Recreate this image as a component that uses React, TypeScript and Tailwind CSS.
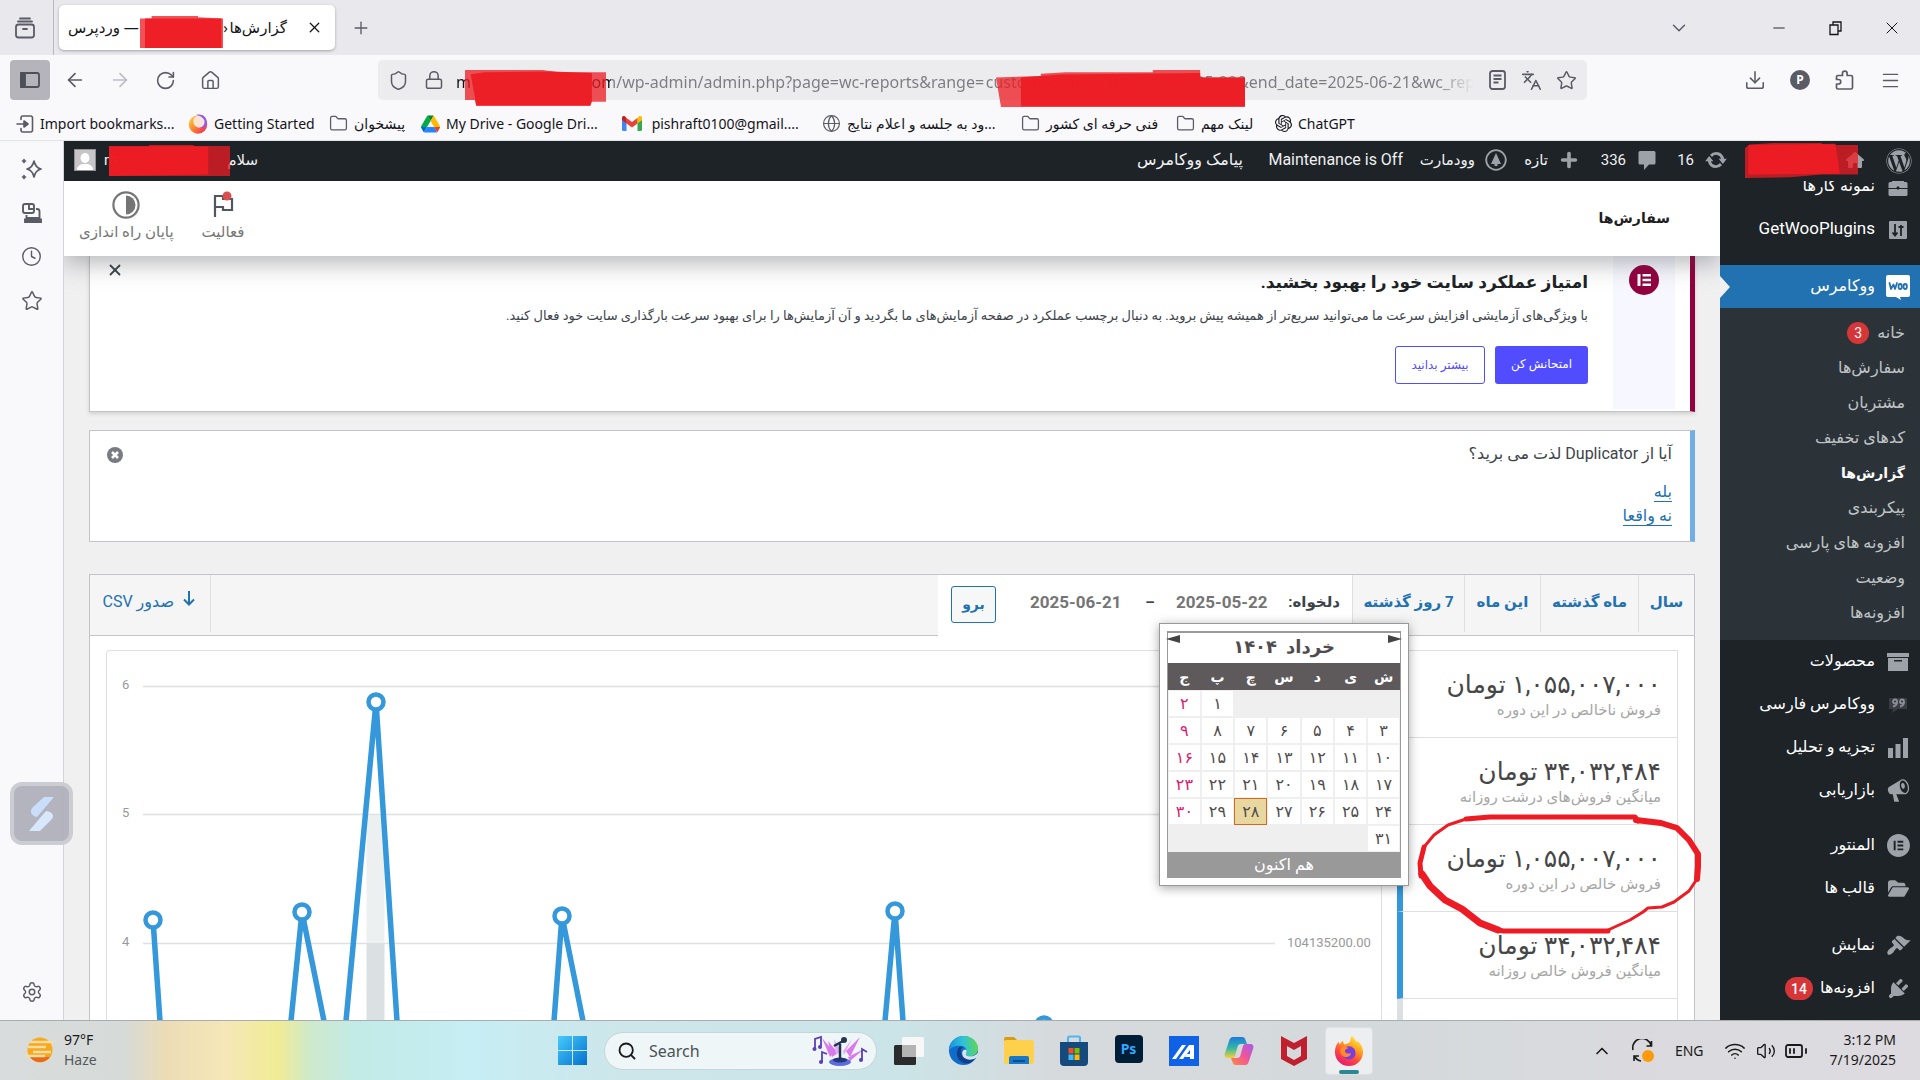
import type { ReactNode } from "react";
import {
  ArrowLeft,
  ArrowRight,
  BatteryMedium,
  ChevronDown,
  ChevronUp,
  Clock,
  Download,
  Folder,
  Globe,
  House,
  Languages,
  Lock,
  Menu,
  Minus,
  Plus,
  RotateCw,
  Search,
  Settings,
  Shield,
  Star,
  Volume2,
  Wifi,
  X,
} from "lucide-react";
import { FaElementor, FaFolderOpen, FaHouse, FaWordpress, FaWrench } from "react-icons/fa6";
import { SiOpenai } from "react-icons/si";

/* ---------- small drawings ---------- */

function RedMark({ className, points, inner }: { className: string; points: string; inner: string }) {
  return (
    <svg className={`pointer-events-none absolute overflow-visible ${className}`} viewBox="0 0 100 100" preserveAspectRatio="none" aria-hidden="true">
      <polygon points={points} fill="#ed1c24" opacity=".76" />
      <polygon points={inner} fill="#ed1c24" opacity=".95" />
    </svg>
  );
}

function FirefoxIcon({ size }: { size: number }) {
  return (
    <svg width={size} height={size} viewBox="0 0 32 32" aria-hidden="true">
      <defs>
        <linearGradient id="ff" x1=".8" y1="0" x2=".25" y2="1">
          <stop offset="0" stopColor="#fff44f" />
          <stop offset=".35" stopColor="#ffa41c" />
          <stop offset=".65" stopColor="#ff4a3d" />
          <stop offset="1" stopColor="#e3157a" />
        </linearGradient>
      </defs>
      <path d="M19 0c4 3 5 7 5 7s1-1 1-2c4 3 6 8 6 12 0 8-6 15-15 15S1 25 1 17c0-5 2-9 4-11l1 3 3-4 2 4c2-1 5-1 6-3s0-4 2-6z" fill="url(#ff)" />
      <circle cx="16" cy="18" r="7" fill="#7a3ee0" />
      <path d="M8 12c3-2 6 0 8 1-3 0-5 2-4 4s4 2 6 1c0 4-6 6-9 3s-3-7-1-9z" fill="#ff8a2a" />
    </svg>
  );
}

function GettingStartedIcon() {
  return (
    <svg width="20" height="20" viewBox="0 0 20 20" aria-hidden="true">
      <defs>
        <linearGradient id="gs" x1="0" y1=".3" x2=".8" y2="1">
          <stop offset="0" stopColor="#ffc53a" />
          <stop offset=".5" stopColor="#ff7a2f" />
          <stop offset="1" stopColor="#f0305c" />
        </linearGradient>
      </defs>
      <circle cx="10" cy="10.500" r="9.200" fill="url(#gs)" />
      <circle cx="11.500" cy="7.500" r="6.200" fill="#fbe3d8" />
      <path d="M8 1c7-2 12 3 10.500 9.500C17 14 14 14.500 11 14c4-1 6-4 5.500-7S12 1.500 8 1z" fill="#9059e8" />
    </svg>
  );
}

function DriveIcon() {
  return (
    <svg width="19" height="18" viewBox="0 0 87 78" aria-hidden="true">
      <path d="M6.600 66.900 10.500 73.600c.8 1.400 2 2.500 3.300 3.300L27.500 53H0c0 1.600.4 3.100 1.200 4.500z" fill="#0066da" />
      <path d="M43.700 25 29.900 1.200c-1.300.8-2.500 1.900-3.300 3.300L1.200 48.500A9 9 0 0 0 0 53h27.500z" fill="#00ac47" />
      <path d="M73.500 76.800c1.400-.8 2.500-1.900 3.300-3.300l1.600-2.700 7.700-13.300c.8-1.400 1.200-3 1.200-4.500H59.800l5.900 11.500z" fill="#ea4335" />
      <path d="M43.700 25 57.400 1.200C56 .4 54.500 0 52.900 0H34.400c-1.600 0-3.200.4-4.500 1.200z" fill="#00832d" />
      <path d="M59.800 53H27.500L13.800 76.800c1.300.8 2.900 1.200 4.500 1.200h50.800c1.600 0 3.100-.4 4.400-1.200z" fill="#2684fc" />
      <path d="M73.400 26.500 60.700 4.500c-.8-1.400-1.900-2.500-3.300-3.300L43.700 25l16.100 28h27.500c0-1.600-.4-3.100-1.200-4.500z" fill="#ffba00" />
    </svg>
  );
}

function GmailIcon() {
  return (
    <svg width="20" height="15" viewBox="0 0 20 15" aria-hidden="true">
      <path d="M0 2h4.500v13H1.500A1.500 1.500 0 0 1 0 13.500z" fill="#4285f4" />
      <path d="M15.500 2H20v11.500a1.500 1.500 0 0 1-1.500 1.500h-3z" fill="#34a853" />
      <path d="M4.500 2 10 6l5.500-4v5.500L10 11.500 4.500 7.500z" fill="#ea4335" />
      <path d="M0 2c0-2 2-2.500 3.200-1.500L4.500 2v5.500L0 4z" fill="#c5221f" />
      <path d="M20 2c0-2-2-2.500-3.200-1.500L15.500 2v5.500L20 4z" fill="#fbbc04" />
    </svg>
  );
}

function ImportIcon() {
  return (
    <svg width="18" height="18" viewBox="0 0 18 18" fill="none" stroke="#5b5b66" strokeWidth="1.600" strokeLinecap="round" strokeLinejoin="round" aria-hidden="true">
      <path d="M5 4.500V3a2 2 0 0 1 2-2h7.500a2 2 0 0 1 2 2v12a2 2 0 0 1-2 2H7a2 2 0 0 1-2-2v-1.500M1 9h8" />
      <path d="M8 6l4 3-4 3z" fill="#5b5b66" />
    </svg>
  );
}

function SyncArrows({ size, color }: { size: number; color: string }) {
  return (
    <svg width={size} height={size} viewBox="0 0 20 20" fill={color} aria-hidden="true">
      <path d="M10.200 3.300c3.300 0 6.100 2.400 6.600 5.600H19l-3.300 4.400-3.500-4.400h2.100a4.300 4.300 0 0 0-7.600-1.500L5 5.600a6.800 6.800 0 0 1 5.200-2.300zm-.4 13.400a6.700 6.700 0 0 1-6.600-5.600H1l3.300-4.400 3.500 4.400H5.700a4.300 4.300 0 0 0 7.600 1.500l1.700 1.800a6.800 6.800 0 0 1-5.200 2.300z" />
    </svg>
  );
}

function WooIcon() {
  return (
    <svg width="26" height="26" viewBox="0 0 26 26" aria-hidden="true">
      <path d="M3 1h20a2 2 0 0 1 2 2v18a2 2 0 0 1-2 2h-8l1 3-5-3H3a2 2 0 0 1-2-2V3a2 2 0 0 1 2-2z" fill="#fff" />
      <g fill="none" stroke="#2271b1" strokeWidth="1.800" strokeLinecap="round" strokeLinejoin="round">
        <path d="M4.500 9 6 15l2.500-4.500L10 15l2-6" />
        <ellipse cx="15.200" cy="12.500" rx="1.700" ry="2.500" />
        <ellipse cx="20.200" cy="12.500" rx="1.700" ry="2.500" />
      </g>
    </svg>
  );
}

function PortfolioIcon() {
  return (
    <svg width="20" height="20" viewBox="0 0 20 20" aria-hidden="true">
      <path d="M4 2h3l1 2h4l1-2h3v3h2a1.500 1.500 0 0 1 1.500 1.500V11H.5V6.500A1.500 1.500 0 0 1 2 5h2zM.5 12h19v5.500A1.500 1.500 0 0 1 18 19H2a1.500 1.500 0 0 1-1.500-1.500z" fill="#9ca2a7" />
      <path d="M10 9l2 2-2 2-2-2z" fill="#1d2327" />
    </svg>
  );
}

function SlidersIcon() {
  return (
    <svg width="20" height="20" viewBox="0 0 20 20" aria-hidden="true">
      <rect x="1" y="1" width="18" height="18" rx="1" fill="#9ca2a7" />
      <path d="M7 4v11M4.500 12.500 7 15.500l2.500-3M13 16V5M10.500 7h5" stroke="#1d2327" strokeWidth="1.800" fill="none" />
    </svg>
  );
}

function ArchiveIcon() {
  return (
    <svg width="22" height="18" viewBox="0 0 22 18" fill="#9ca2a7" aria-hidden="true">
      <path d="M0 0h22v4H0zM1 5h20v13H1z" />
      <path d="M7 7h8v1.500H7z" fill="#1d2327" />
    </svg>
  );
}

function BarsIcon() {
  return (
    <svg width="20" height="20" viewBox="0 0 20 20" fill="#9ca2a7" aria-hidden="true">
      <path d="M0 10h5v10H0zM7.500 6h5v14h-5zM15 0h5v20h-5z" />
    </svg>
  );
}

function QuoteIcon() {
  return (
    <svg width="18" height="16" viewBox="0 0 18 16" aria-hidden="true">
      <path d="M0 1h18v11H9l-6 4 1-4H0z" fill="#3b3b44" />
      <g fill="none" stroke="#8a8f95" strokeWidth="1.800">
        <circle cx="6" cy="4.500" r="2" />
        <path d="M8 5c0 3-1.500 4-4 4.500" />
        <circle cx="13" cy="4.500" r="2" />
        <path d="M15 5c0 3-1.500 4-4 4.500" />
      </g>
    </svg>
  );
}

function Dashicon({ d }: { d: string }) {
  return (
    <svg width="25" height="25" viewBox="0 0 20 20" fill="currentColor" fillRule="evenodd" aria-hidden="true">
      <path d={d} />
    </svg>
  );
}

const megaphone =
  "M18.150 5.940c.46 1.620.38 3.220-.02 4.480-.42 1.280-1.260 2.180-2.300 2.480-.16.06-.26.06-.4.06-.06.02-.12.02-.18.02-.06.02-.14.02-.22.02h-6.800l2.220 5.500c.02.14-.06.26-.14.34-.08.1-.24.16-.34.16H6.950c-.1 0-.26-.06-.34-.16-.08-.08-.16-.2-.14-.34l-1-5.500H4.250l-.02-.02c-.5.06-1.080-.18-1.540-.62s-.88-1.080-1.060-1.880c-.24-.8-.2-1.560-.02-2.200.18-.62.58-1.080 1.060-1.300l.02-.02 9-5.400c.1-.06.18-.1.24-.16.06-.04.14-.08.24-.12.16-.08.28-.12.5-.18 1.040-.3 2.240.1 3.220.98s1.840 2.240 2.260 3.860zm-2.580 5.980h-.02c.4-.1.74-.34 1.040-.7.58-.7.86-1.760.86-3.040 0-.64-.1-1.300-.28-1.980-.34-1.360-1.020-2.500-1.780-3.240s-1.680-1.100-2.460-.88c-.82.22-1.400.96-1.700 2-.32 1.040-.28 2.360.06 3.720.38 1.360 1 2.500 1.800 3.240.78.74 1.620 1.100 2.480.88zm-2.540-7.960c.22-.04.42-.02.62.04.38.16.76.48 1.020 1s.42 1.200.42 1.780c0 .3-.04.56-.12.8-.18.48-.44.84-.86.94-.34.1-.8-.06-1.140-.4s-.64-.86-.78-1.500c-.18-.62-.12-1.240.02-1.720s.48-.84.82-.94z";
const brush =
  "M14.480 11.060L7.410 3.990l1.500-1.500c.5-.56 2.300-.47 3.510.32 1.210.8 1.430 1.280 2.910 2.100 1.180.64 2.450 1.260 4.450.85zm-.71.71L6.700 4.700 4.930 6.470c-.39.39-.39 1.020 0 1.410l1.060 1.060c.39.39.39 1.030 0 1.420-.6.6-1.430 1.110-2.210 1.690-.35.26-.7.53-1.010.84C1.430 14.230.4 16.080 1.400 17.070c.99 1 2.840-.03 4.180-1.360.31-.31.58-.66.85-1.020.57-.78 1.080-1.610 1.690-2.210.39-.39 1.020-.39 1.410 0l1.060 1.060c.39.39 1.020.39 1.410 0z";
const plug =
  "M13.110 4.360L9.870 7.600 8 5.730l3.240-3.240c.35-.34 1.050-.2 1.560.32.52.51.66 1.210.31 1.550zm-8 1.770l.91-1.120 9.010 9.010-1.190.84c-.71.71-2.630 1.160-3.820 1.160H6.140L4.900 17.260c-.59.59-1.540.59-2.120 0-.59-.58-.59-1.530 0-2.120l1.240-1.240v-3.880c0-1.130.4-3.190 1.090-3.890zm7.260 3.970l3.240-3.240c.34-.35 1.040-.21 1.550.31.52.51.66 1.210.31 1.550l-3.240 3.250z";

/* ---------- browser chrome ---------- */

function TitleBar() {
  return (
    <header className="flex h-[55px] shrink-0 items-center bg-[#e9e8ed] text-[#15141a]">
      <div className="flex h-full w-[54px] items-center border-r border-[#b9b8c0] pl-3.5">
        <button aria-label="Tab archive" className="text-[#5b5b66]">
          <svg width="22" height="22" viewBox="0 0 22 22" fill="none" stroke="currentColor" strokeWidth="1.800" strokeLinecap="round">
            <path d="M6 1.500h10M4 4.500h14" />
            <rect x="2" y="7.500" width="18" height="13" rx="2.500" />
            <path d="M9 12h4" />
          </svg>
        </button>
      </div>
      <div className="relative ml-[5px] flex h-[45px] w-[276px] items-center justify-between rounded-[5px] bg-white pr-3 pl-[9px] shadow-[0_1px_3px_rgba(0,0,0,0.3)]">
        <div dir="rtl" className="flex w-[219px] justify-between text-[15px] whitespace-nowrap">
          <span>گزارش‌ها{"\u200a"}‹</span>
          <span>— وردپرس</span>
        </div>
        <button aria-label="Close tab">
          <X size={17} strokeWidth={1.8} />
        </button>
        <RedMark className="top-[11px] left-[81px] h-8 w-[83px]" points="0,8 14,8 14,0 70,0 70,4 100,8 100,100 0,100" inner="6,8 98,8 98,100 6,100" />
      </div>
      <button aria-label="New tab" className="ml-4 text-[#5b5b66]">
        <Plus size={20} strokeWidth={1.6} />
      </button>
      <div className="flex-1" />
      <button aria-label="List all tabs" className="mr-20 text-[#5b5b66]">
        <ChevronDown size={22} strokeWidth={1.6} />
      </button>
      <button aria-label="Minimize" className="mr-10">
        <Minus size={18} strokeWidth={1.2} />
      </button>
      <button aria-label="Restore" className="mr-[38px]">
        <svg width="16" height="16" viewBox="0 0 16 16" fill="none" stroke="currentColor" strokeWidth="1.300">
          <path d="M2 5h8v9.500H2zM5 5V2h8v9h-3" />
        </svg>
      </button>
      <button aria-label="Close window" className="mr-[18px]">
        <X size={20} strokeWidth={1.2} />
      </button>
    </header>
  );
}

function NavBar() {
  return (
    <div className="flex h-[50px] shrink-0 items-center bg-[#f9f9fb] text-[#5b5b66]">
      <button aria-label="Sidebar" className="ml-2.5 flex h-10 w-10 items-center justify-center rounded-[4px] bg-[#b5b4ba]">
        <svg width="20" height="16" viewBox="0 0 20 16" fill="none" stroke="#4f4f5a" strokeWidth="1.800">
          <rect x="1" y="1" width="18" height="14" rx="2" />
          <path d="M1 1h4v14H1z" fill="#4f4f5a" />
        </svg>
      </button>
      <button aria-label="Back" className="ml-3.5">
        <ArrowLeft size={22} strokeWidth={1.8} />
      </button>
      <button aria-label="Forward" className="ml-[23px] text-[#bdbcc3]">
        <ArrowRight size={22} strokeWidth={1.8} />
      </button>
      <button aria-label="Reload" className="ml-6">
        <RotateCw size={21} strokeWidth={1.8} />
      </button>
      <button aria-label="Home" className="ml-6">
        <House size={21} strokeWidth={1.7} />
      </button>
      <div className="relative ml-[157px] flex h-10 min-w-0 flex-1 items-center rounded-[5px] bg-[#ececee] pr-2.5 pl-2.5">
        <Shield size={21} strokeWidth={1.7} className="shrink-0" />
        <Lock size={20} strokeWidth={1.8} className="ml-[15px] shrink-0" />
        <input
          aria-label="Address"
          readOnly
          className="ml-3 min-w-0 flex-1 bg-[linear-gradient(90deg,#15141a_155px,#7c7b80_155px,#7c7b80_980px,#ececee_1018px)] bg-clip-text pt-1 text-base text-transparent outline-none"
          value={
            "m" + "\u00a0".repeat(29) + "om/wp-admin/admin.php?page=wc-reports&range=\u200acustom&start_date" + "\u00a0".repeat(6) + "2025-05-22&end_date=2025-06-21&wc_reports"
          }
        />
        <svg width="17" height="20" viewBox="0 0 17 20" fill="none" stroke="currentColor" strokeWidth="1.800" className="ml-4 shrink-0">
          <rect x="1" y="1" width="15" height="18" rx="2.500" />
          <path d="M4.500 5.500h8M4.500 9h8M4.500 12.500h5" />
        </svg>
        <Languages size={21} strokeWidth={1.9} className="ml-[15px] shrink-0" />
        <Star size={21} strokeWidth={1.7} className="ml-3.5 shrink-0" />
        <RedMark className="top-2.5 left-[87px] h-9 w-[141px]" points="0,0 55,0 66,6 100,6 100,88 89,88 89,100 8,100 7,83 0,83" inner="4,12 14,6 62,4 90,8 90,88 89,98 8,98" />
        <RedMark className="top-2.5 left-[618px] h-[37px] w-[249px]" points="0,20 18,16 18,10 28,6 63,6 63,0 82,0 82,20 100,20 100,100 2,100" inner="10,20 26,12 82,8 82,20 100,20 100,98 10,98" />
      </div>
      <div className="ml-[157px] flex items-center gap-6 pr-[19px]">
        <button aria-label="Downloads">
          <Download size={22} strokeWidth={1.7} />
        </button>
        <button aria-label="Profile" className="flex h-5 w-5 items-center justify-center rounded-full bg-[#5b5b66] text-xs font-bold text-white">
          P
        </button>
        <button aria-label="Extensions">
          <svg width="22" height="22" viewBox="0 0 22 22" fill="none" stroke="currentColor" strokeWidth="1.700" strokeLinejoin="round">
            <path d="M4 20a1.500 1.500 0 0 1-1.500-1.500V15h2a2 2 0 1 0 0-4.500h-2V8A1.500 1.500 0 0 1 4 6.500h4.500v-2a2.300 2.300 0 0 1 4.600 0v2H17A1.500 1.500 0 0 1 18.500 8v10.500A1.500 1.500 0 0 1 17 20z" />
          </svg>
        </button>
        <button aria-label="Menu">
          <Menu size={21} strokeWidth={1.7} />
        </button>
      </div>
    </div>
  );
}

const folder = <Folder size={19} strokeWidth={1.6} className="text-[#5b5b66]" />;

const bookmarks: { width: string; icon: ReactNode; label: string }[] = [
  { width: "w-[172px]", icon: <ImportIcon />, label: "Import bookmarks..." },
  { width: "w-[141px]", icon: <GettingStartedIcon />, label: "Getting Started" },
  { width: "w-[92px]", icon: folder, label: "پیشخوان" },
  { width: "w-[201px]", icon: <DriveIcon />, label: "My Drive - Google Dri..." },
  { width: "w-[200px]", icon: <GmailIcon />, label: "\u00a0pishraft0100@gmail...." },
  { width: "w-[199px]", icon: <Globe size={19} strokeWidth={1.5} className="text-[#5b5b66]" />, label: "...ود به جلسه و اعلام نتایج" },
  { width: "w-[155px]", icon: folder, label: "فنی حرفه ای کشور" },
  { width: "w-[99px]", icon: folder, label: "لینک مهم" },
  { width: "w-[100px]", icon: <SiOpenai size={17} />, label: "ChatGPT" },
];

function BookmarksBar() {
  return (
    <nav className="flex h-9 shrink-0 items-center border-b border-[#dfe5e4] bg-[#f9f9fb] pt-0.5 pl-4 text-sm text-[#15141a]">
      {bookmarks.map((b) => (
        <a key={b.label} href="#" className={`flex shrink-0 items-center gap-1.5 whitespace-nowrap ${b.width}`}>
          <span className="shrink-0">{b.icon}</span>
          <bdi>{b.label}</bdi>
        </a>
      ))}
    </nav>
  );
}

function BrowserSidebar() {
  return (
    <aside className="relative z-20 flex w-16 shrink-0 flex-col items-center border-r border-[#d4d3d8] bg-[#f9f9fb] pt-[17px] text-[#5b5b66]">
      <button aria-label="AI chat">
        <svg width="22" height="22" viewBox="0 0 22 22" fill="none" stroke="currentColor" strokeWidth="1.700" strokeLinejoin="round" strokeLinecap="round">
          <path d="M13 3c1 5 3 7 7 8-4 1-6 3-7 8-1-5-3-7-7-8 4-1 6-3 7-8zM3 1.500v3M1.500 3h3M3 17.500v3M1.500 19h3" />
        </svg>
      </button>
      <button aria-label="Synced tabs" className="mt-[22px]">
        <svg width="22" height="22" viewBox="0 0 22 22" fill="none" stroke="currentColor" strokeWidth="1.900">
          <rect x="2" y="2" width="11" height="9" rx="2" />
          <path d="M8 2v5h5M15 7h1a2.500 2.500 0 0 1 2.500 2.500V16h-13v-3" />
          <path d="M4 17.500h16V20H4z" fill="currentColor" />
        </svg>
      </button>
      <button aria-label="History" className="mt-[22px]">
        <Clock size={21} strokeWidth={1.6} />
      </button>
      <button aria-label="Bookmarks" className="mt-[23px]">
        <Star size={22} strokeWidth={1.6} />
      </button>
      <div className="flex-1" />
      <button aria-label="Customize sidebar" className="mb-[17px]">
        <Settings size={22} strokeWidth={1.6} />
      </button>
      {/* floating helper hangs over the page edge */}
      <button aria-label="Helper" className="absolute top-[641px] left-2.5 flex h-[63px] w-[63px] items-center justify-center rounded-[12px] border-4 border-[#cfcfd6]/90 bg-[#afb0ba]/95">
        <svg width="30" height="38" viewBox="0 0 30 38">
          <path d="M17 2h10L10 22c-6-1-8-6-4-10z" fill="#c9defa" />
          <path d="M13 36H2l17-20c7 1 9 5 5 9z" fill="#d8e8fc" />
        </svg>
      </button>
    </aside>
  );
}

/* ---------- wordpress ---------- */

function AdminBar() {
  return (
    <div className="relative z-20 flex h-10 shrink-0 items-center gap-5 bg-[#1d2327] pr-2 pb-0.5 pl-2.5 text-[15px] whitespace-nowrap text-[#f0f0f1]">
      <a href="#" aria-label="WordPress" className="w-7 shrink-0 pt-0.5 text-[#9ca2a7]">
        <FaWordpress size={26} />
      </a>
      <a href="#" aria-label="Site" className="relative flex w-[116px] shrink-0 items-center text-[#9ca2a7]">
        <FaHouse size={18} />
        <RedMark className="-top-2 -left-[3px] h-[35px] w-[113px]" points="0,14 4,4 25,0 68,0 68,6 100,6 100,90 68,90 40,98 0,100" inner="3,6 80,2 84,88 3,90" />
      </a>
      <a href="#" className="flex w-[52px] shrink-0 items-center gap-2.5">
        <SyncArrows size={24} color="#9ca2a7" />
        16
      </a>
      <a href="#" className="flex w-[58px] shrink-0 items-center gap-3">
        <svg width="18" height="20" viewBox="0 0 18 20" fill="#9ca2a7" aria-hidden="true">
          <path d="M2 1h14a1.500 1.500 0 0 1 1.500 1.500V13a1.500 1.500 0 0 1-1.500 1.500h-5L6 20v-5.500H2A1.500 1.500 0 0 1 .5 13V2.500A1.500 1.500 0 0 1 2 1z" />
        </svg>
        336
      </a>
      <a href="#" className="flex w-[51px] shrink-0 items-center gap-3">
        <Plus size={22} strokeWidth={4} className="-mx-0.5 shrink-0 text-[#9ca2a7]" />
        تازه
      </a>
      <a href="#" className="flex w-[84px] shrink-0 items-center gap-2.5">
        <svg width="22" height="22" viewBox="0 0 22 22" className="shrink-0" aria-hidden="true">
          <circle cx="11" cy="11" r="9.800" fill="none" stroke="#9ca2a7" strokeWidth="1.800" />
          <path d="M11 4l5 11h-3.500v2h-3v-2H6z" fill="#9ca2a7" />
        </svg>
        وودمارت
      </a>
      <a href="#" className="w-[140px] shrink-0 text-base">
        Maintenance is Off
      </a>
      <a href="#" className="text-base">
        پیامک ووکامرس
      </a>
      <div className="flex-1" />
      <a href="#" className="relative flex w-[184px] items-center justify-between">
        <span>سلام</span>
        <span className="flex items-center gap-2">
          <span>m</span>
          <span className="flex h-[22px] w-[22px] items-end justify-center overflow-hidden border border-[#8f9398] bg-[#c6c6c6]">
            <svg width="18" height="18" viewBox="0 0 18 18" fill="#fff" aria-hidden="true">
              <ellipse cx="9" cy="6" rx="4.500" ry="5" />
              <path d="M1 18c0-4 3-5 5-6h6c2 1 5 2 5 6z" />
            </svg>
          </span>
        </span>
        <RedMark className="-top-1 left-[35px] h-[31px] w-[121px]" points="0,3 33,3 33,0 70,0 70,3 100,3 100,100 0,100" inner="0,4 82,4 82,95 0,100" />
      </a>
    </div>
  );
}

function MenuItem({ icon, label, badge, className = "" }: { icon: ReactNode; label: string; badge?: string; className?: string }) {
  return (
    <a href="#" className={`flex h-[43px] shrink-0 items-center pr-[9px] whitespace-nowrap text-white ${className}`}>
      <span className="flex w-[26px] shrink-0 justify-center text-[#9ca2a7]">{icon}</span>
      <span className={`mr-2.5 pb-0.5 ${label === "GetWooPlugins" ? "text-[17px]" : "text-base"}`}>{label}</span>
      {badge && <span className="mr-[7px] flex h-[23px] items-center rounded-full bg-[#d63638] px-1.5 text-sm font-medium">{badge}</span>}
    </a>
  );
}

const subMenu = ["خانه", "سفارش‌ها", "مشتریان", "کدهای تخفیف", "گزارش‌ها", "پیکربندی", "افزونه های پارسی", "وضعیت", "افزونه‌ها"];

function AdminMenu() {
  return (
    <nav className="w-[200px] shrink-0 overflow-hidden bg-[#1d2327]">
      <div className="-mt-4 flex flex-col">
        <MenuItem icon={<PortfolioIcon />} label="نمونه کارها" />
        <MenuItem icon={<SlidersIcon />} label="GetWooPlugins" />
        <div className="relative mt-3.5">
          <MenuItem icon={<WooIcon />} label="ووکامرس" className="bg-[#2271b1]" />
          <span className="absolute top-[11px] right-[190px] h-0 w-0 border-y-[11px] border-r-0 border-l-[10px] border-y-transparent border-l-[#f0f0f1]" />
        </div>
        <ul className="bg-[#2c3338] pt-[7px] pb-2.5">
          {subMenu.map((label) => (
            <li key={label} className="flex h-[35px] items-center gap-2 pr-[15px]">
              <a href="#" className={label === "گزارش‌ها" ? "text-sm font-bold text-white" : "text-base text-[#bfc3c6]"}>
                {label}
              </a>
              {label === "خانه" && <span className="flex h-[22px] w-[22px] items-center justify-center rounded-full bg-[#d63638] text-sm text-white">3</span>}
            </li>
          ))}
        </ul>
        <MenuItem icon={<ArchiveIcon />} label="محصولات" />
        <MenuItem icon={<QuoteIcon />} label="ووکامرس فارسی" />
        <MenuItem icon={<BarsIcon />} label="تجزیه و تحلیل" />
        <MenuItem icon={<Dashicon d={megaphone} />} label="بازاریابی" />
        <MenuItem icon={<FaElementor size={23} />} label="المنتور" className="mt-3" />
        <MenuItem icon={<FaFolderOpen size={21} />} label="قالب ها" />
        <MenuItem icon={<Dashicon d={brush} />} label="نمایش" className="mt-3.5" />
        <MenuItem icon={<Dashicon d={plug} />} label="افزونه‌ها" badge="14" />
        <MenuItem icon={<FaWrench size={22} />} label="" />
      </div>
    </nav>
  );
}

function WooHeader() {
  return (
    <div className="relative z-10 flex h-[75px] shrink-0 items-center bg-white pr-[50px] pb-0.5 pl-[15px] shadow-[0_8px_22px_rgba(60,64,70,0.36)]">
      <h1 className="flex-1 text-sm font-bold text-[#1e1e1e]">سفارش‌ها</h1>
      <div className="flex items-center gap-7 text-[15px] text-[#757575]">
        <button className="flex flex-col items-center gap-0.5">
          <svg width="26" height="28" viewBox="0 0 26 28" fill="none" aria-hidden="true">
            <path d="M5 26V5h8v3h9v11h-9v-3H5" stroke="#50575e" strokeWidth="2.200" />
            <circle cx="17" cy="5" r="4.500" fill="#d94f4f" />
          </svg>
          فعالیت
        </button>
        <button className="flex flex-col items-center gap-0.5">
          <svg width="28" height="28" viewBox="0 0 28 28" aria-hidden="true">
            <circle cx="14" cy="14" r="12.600" fill="none" stroke="#757575" strokeWidth="2.200" />
            <path d="M14 4.500a9.500 9.500 0 0 1 0 19z" fill="#757575" />
          </svg>
          پایان راه اندازی
        </button>
      </div>
    </div>
  );
}

function ElementorNotice() {
  return (
    <section className="relative flex h-[156px] shrink-0 border-r-[5px] border-b border-l border-r-[#93003f] border-b-[#c3c4c7] border-l-[#c3c4c7] bg-white pr-[15px] shadow-[0_2px_4px_rgba(0,0,0,0.13)]">
      <div className="mb-0.5 flex w-[62px] shrink-0 justify-center bg-[#f7f7ff] pt-[9px]">
        <svg width="30" height="30" viewBox="0 0 30 30" aria-hidden="true">
          <circle cx="15" cy="15" r="15" fill="#93003f" />
          <path d="M8.500 9h3v12h-3zM13.500 9H22v2.500h-8.500zM13.500 13.700H22v2.500h-8.500zM13.500 18.500H22V21h-8.500z" fill="#fff" />
        </svg>
      </div>
      <div className="mr-[25px] pt-3 text-[#3c434a]">
        <h2 className="text-[17px] leading-7 font-bold text-[#1d2327]">امتیاز عملکرد سایت خود را بهبود بخشید.</h2>
        <p className="mt-2 text-[13px] leading-6 whitespace-nowrap">
          با ویژگی‌های آزمایشی افزایش سرعت ما می‌توانید سریع‌تر از همیشه پیش بروید. به دنبال برچسب عملکرد در صفحه آزمایش‌های ما بگردید و آن آزمایش‌ها را برای بهبود سرعت بارگذاری سایت خود فعال کنید.
        </p>
        <div className="mt-[18px] flex gap-2.5 text-xs">
          <button className="h-[38px] w-[93px] rounded-[3px] bg-[#524cff] pb-0.5 text-white">امتحانش کن</button>
          <button className="h-[38px] w-[90px] rounded-[3px] border border-[#524cff] text-[#524cff]">بیشتر بدانید</button>
        </div>
      </div>
      <button aria-label="Dismiss" className="absolute top-[5px] left-4 text-[#3c434a]">
        <X size={18} strokeWidth={2.4} />
      </button>
    </section>
  );
}

function DuplicatorNotice() {
  return (
    <section className="relative mt-[18px] h-28 shrink-0 border border-r-[5px] border-[#c3c4c7] border-r-[#72aee6] bg-white pt-[11px] pr-[18px] text-base leading-6 text-[#3c434a]">
      <p>آیا از Duplicator لذت می برید؟</p>
      <p className="mt-3.5">
        <a href="#" className="border-b border-[#2271b1] leading-5 text-[#2271b1]">
          بله
        </a>
      </p>
      <p>
        <a href="#" className="border-b border-[#2271b1] leading-5 text-[#2271b1]">
          نه واقعا
        </a>
      </p>
      <button aria-label="Dismiss" className="absolute top-4 left-[17px]">
        <svg width="16" height="16" viewBox="0 0 16 16">
          <circle cx="8" cy="8" r="8" fill="#787c82" />
          <path d="M5 5l6 6M11 5l-6 6" stroke="#fff" strokeWidth="2.600" />
        </svg>
      </button>
    </section>
  );
}

const ranges = [
  { label: "سال", width: "w-14" },
  { label: "ماه گذشته", width: "w-[98px]" },
  { label: "این ماه", width: "w-[76px]" },
  { label: "7 روز گذشته", width: "w-[112px]" },
];

function RangeBar() {
  return (
    <div className="flex h-[61px] shrink-0 border-b border-[#c3c4c7] bg-[#f5f5f5] text-[15px] font-bold">
      {ranges.map((r) => (
        <a key={r.label} href="#" className={`mb-[3px] flex shrink-0 items-center justify-center border-l border-[#dfdfdf] pb-0.5 whitespace-nowrap text-[#2271b1] ${r.width}`}>
          {r.label}
        </a>
      ))}
      <form className="-mb-px flex w-[414px] shrink-0 items-start bg-white pt-[11px] pr-3 text-[#3c434a]">
        <label htmlFor="range-from" className="w-[52px] leading-8">
          دلخواه:
        </label>
        <input id="range-from" dir="ltr" readOnly value="2025-05-22" className="mr-[18px] h-8 w-[94px] text-[17px] text-[#757575] outline-none" />
        <span className="w-[52px] text-center leading-8">–</span>
        <input aria-label="End date" dir="ltr" readOnly value="2025-06-21" className="h-8 w-[94px] text-[17px] text-[#757575] outline-none" />
        <button type="button" className="mr-[34px] h-[37px] w-[45px] rounded-[3px] border border-[#2271b1] bg-[#f6f7f7] pb-0.5 text-sm text-[#2271b1]">
          برو
        </button>
      </form>
      <div className="flex-1" />
      <a href="#" className="mb-[3px] flex w-[121px] items-center gap-2 border-r border-[#dfdfdf] pr-3.5 pb-1 text-base font-normal whitespace-nowrap text-[#2271b1]">
        <svg width="14" height="16" viewBox="0 0 14 16" fill="none" stroke="currentColor" strokeWidth="2" className="mb-1.5 shrink-0" aria-hidden="true">
          <path d="M7 0v13M2 8.500l5 5 5-5" />
        </svg>
        صدور CSV
      </a>
    </div>
  );
}

const stats = [
  { amount: "۱,۰۵۵,۰۰۷,۰۰۰ تومان", label: "فروش ناخالص در این دوره", bar: "border-l-[#b1d4ea]" },
  { amount: "۳۴,۰۳۲,۴۸۴ تومان", label: "میانگین فروش‌های درشت روزانه", bar: "border-l-[#b1d4ea]" },
  { amount: "۱,۰۵۵,۰۰۷,۰۰۰ تومان", label: "فروش خالص در این دوره", bar: "border-l-[#3498db]" },
  { amount: "۳۴,۰۳۲,۴۸۴ تومان", label: "میانگین فروش خالص روزانه", bar: "border-l-[#3498db]" },
  { amount: "", label: "", bar: "border-l-[#dbe1e3]" },
];

function StatList() {
  return (
    <div className="relative mt-3.5 w-[281px] shrink-0">
      <ul className="border-t border-r border-[#dfdfdf]">
        {stats.map((s, i) => (
          <li key={i} className={`h-[87px] border-b border-l-[6px] border-b-[#dfdfdf] pt-4 pr-4 ${s.bar}`}>
            <p className="text-[25px] leading-9 whitespace-nowrap text-[#464646]">{s.amount}</p>
            <p className="text-[15px] leading-[14px] whitespace-nowrap text-[#a6a6a6]">{s.label}</p>
          </li>
        ))}
      </ul>
      {/* hand-drawn ring around the third figure */}
      <svg className="pointer-events-none absolute top-[164px] -right-6 overflow-visible" width="284" height="122" viewBox="1418 815 284 122" fill="none" stroke="#ed1c24" strokeLinecap="round" strokeLinejoin="round" aria-hidden="true">
        <path d="M1466 820 1490 818H1635L1638 822" strokeWidth="5" />
        <path d="M1636 821 1661 824 1677 829 1689 841 1698 855V868L1697 880" strokeWidth="6" />
        <path d="M1697 880 1689 892 1674 903 1662 908 1648 909 1643 913 1630 921 1608 931" strokeWidth="3" />
        <path d="M1608 932H1503L1494 930" strokeWidth="5" />
        <path d="M1498 931 1480 924 1462 910 1445 901 1430 887 1422 875" strokeWidth="7" />
        <path d="M1421 877 1420 864 1424 848" strokeWidth="5" />
        <path d="M1424 848 1434 836 1448 826 1466 820" strokeWidth="3" />
      </svg>
    </div>
  );
}

// line vertices; the low ones fall outside of the visible part of the plot
const lines = ["M46 269L53 370", "M184 370L195 261L217 370", "M239 370L269 51L290 370", "M447 370L455 265L476 370", "M778 370L788 260L796 370"];
const dots = [
  [46, 269],
  [195, 261],
  [269, 51],
  [455, 265],
  [788, 260],
  [937, 374],
];

function Chart() {
  return (
    <div dir="ltr" className="mt-3.5 mr-[15px] ml-4 min-w-0 flex-1 overflow-hidden rounded-t-[4px] border border-b-0 border-[#dfdfdf]">
      <svg width="1276" height="380" viewBox="0 0 1276 380" className="font-[Roboto,sans-serif]" aria-label="Sales chart">
        {[
          { y: 35, label: "6" },
          { y: 163, label: "5" },
          { y: 292, label: "4" },
        ].map((g) => (
          <g key={g.label}>
            <path d={`M36 ${g.y}.500H1168`} stroke="#dfe0e1" strokeWidth="1.500" />
            <text x="15" y={g.y + 3} fontSize="13" fill="#999">
              {g.label}
            </text>
          </g>
        ))}
        <text x="1180" y="296" fontSize="13" fill="#999">
          104135200.00
        </text>
        <path d="M259.500 164h18v128h-18z" fill="#ecf0f1" />
        <path d="M259.500 292h18v88h-18z" fill="#dbe1e3" />
        <g stroke="#3498db" strokeWidth="5.500" fill="none" strokeLinejoin="round">
          {lines.map((d) => (
            <path key={d} d={d} />
          ))}
          {dots.map(([x, y]) => (
            <circle key={x} cx={x} cy={y} r="7.500" fill="#fff" strokeWidth="4.500" />
          ))}
        </g>
      </svg>
    </div>
  );
}

const weeks = [
  ["", "", "", "", "", "۱", "۲"],
  ["۳", "۴", "۵", "۶", "۷", "۸", "۹"],
  ["۱۰", "۱۱", "۱۲", "۱۳", "۱۴", "۱۵", "۱۶"],
  ["۱۷", "۱۸", "۱۹", "۲۰", "۲۱", "۲۲", "۲۳"],
  ["۲۴", "۲۵", "۲۶", "۲۷", "۲۸", "۲۹", "۳۰"],
  ["۳۱", "", "", "", "", "", ""],
];

function DatePopup() {
  return (
    <div className="absolute top-12 right-[285px] z-10 w-[250px] border border-[#999] bg-white p-[7px] shadow-[0_2px_10px_rgba(0,0,0,0.35)]">
      <div className="relative h-8 border-x border-t-2 border-[#999] text-center text-lg leading-7 font-bold text-[#504c4e]">
        خرداد&nbsp; ۱۴۰۴
        <button aria-label="Previous month" className="absolute top-[2px] -right-[2px] border-y-4 border-l-[14px] border-y-transparent border-l-[#444]" />
        <button aria-label="Next month" className="absolute top-[2px] -left-[2px] border-y-4 border-r-[14px] border-y-transparent border-r-[#444]" />
      </div>
      <table className="w-full table-fixed border-collapse border-x border-[#999] bg-[#efefef] text-center text-base text-[#504c4e]">
        <thead>
          <tr className="h-[27px] bg-[#5e5a5c] text-sm text-white">
            {["ش", "ی", "د", "س", "چ", "پ", "ج"].map((d) => (
              <th key={d}>{d}</th>
            ))}
          </tr>
        </thead>
        <tbody>
          {weeks.map((week, w) => (
            <tr key={w} className="h-[27px]">
              {week.map((day, d) => (
                <td key={d} className="p-px">
                  {day && (
                    <button
                      className={`block h-[25px] w-full leading-[25px] ${day === "۲۸" ? "bg-[#e9d7a0] leading-[23px] outline outline-[#d06a20]" : "bg-white"} ${d === 6 ? "text-[#d81b70]" : ""}`}
                    >
                      {day}
                    </button>
                  )}
                </td>
              ))}
            </tr>
          ))}
        </tbody>
      </table>
      <button className="block h-[26px] w-full bg-[#999] text-base leading-[26px] text-white">هم اکنون</button>
    </div>
  );
}

function WordPress() {
  return (
    <div dir="rtl" className="flex min-w-0 flex-1 flex-col bg-[#f0f0f1] font-[Roboto,'DejaVu_Sans',sans-serif]">
      <AdminBar />
      <div className="flex min-h-0 flex-1">
        <AdminMenu />
        <div className="flex min-w-0 flex-1 flex-col overflow-hidden">
          <WooHeader />
          <main className="flex min-h-0 flex-1 flex-col pr-[25px] pl-[25px]">
            <ElementorNotice />
            <DuplicatorNotice />
            <section className="relative mt-8 flex min-h-0 flex-1 flex-col border border-b-0 border-[#c3c4c7] bg-white">
              <RangeBar />
              <div className="flex min-h-0 flex-1 pr-4">
                <StatList />
                <Chart />
              </div>
              <DatePopup />
            </section>
          </main>
        </div>
      </div>
    </div>
  );
}

/* ---------- taskbar ---------- */

function SearchArt() {
  return (
    <svg width="56" height="32" viewBox="0 0 56 32" aria-hidden="true">
      <path d="M18 22 10 3l12 14zM38 22 48 2 34 16zM20 22 16 6l10 12zM36 22l16-8-14 12z" fill="#d77bea" />
      <path d="M24 20 22 4l7 12zM32 20l8-16-9 12z" fill="#e9a9f5" />
      <ellipse cx="28" cy="27" rx="11" ry="4" fill="#5b6be0" />
      <ellipse cx="28" cy="25" rx="7" ry="2.500" fill="#27357a" />
      <path d="M28 25V9M22 11l9-5" stroke="#1e3450" strokeWidth="2.500" />
      <circle cx="32" cy="5" r="3" fill="#24384d" />
      <path d="M3 14V4l6-2v9M10 27V17l5 2M50 25V14l5 3" fill="none" stroke="#5a3fb5" strokeWidth="1.800" />
      <circle cx="2.500" cy="14" r="2" fill="#5a3fb5" />
      <circle cx="8" cy="12" r="2" fill="#5a3fb5" />
      <circle cx="9" cy="27" r="2" fill="#5a3fb5" />
      <circle cx="49" cy="25" r="2" fill="#5a3fb5" />
    </svg>
  );
}

const apps: { name: string; icon: ReactNode }[] = [
  {
    name: "Task view",
    icon: (
      <svg width="30" height="30" viewBox="0 0 30 30">
        <rect x="8" y="1" width="22" height="20" rx="1.500" fill="#f7f7f7" />
        <rect x="0" y="9" width="22" height="20" rx="1.500" fill="#2b2b2b" />
        <path d="M8 9h14v12H8z" fill="#b4b4b4" />
      </svg>
    ),
  },
  {
    name: "Edge",
    icon: (
      <svg width="31" height="31" viewBox="0 0 32 32">
        <defs>
          <linearGradient id="edgeTop" x1="0" y1=".5" x2="1" y2=".4">
            <stop offset="0" stopColor="#1b8fe0" />
            <stop offset=".5" stopColor="#2fc2d8" />
            <stop offset="1" stopColor="#62d84e" />
          </linearGradient>
        </defs>
        <circle cx="16" cy="16" r="15" fill="#0f6cc8" />
        <path d="M1 14C2 6 9 1 16 1c9 0 15 6 15 13 0 5-4 8-8 8-5 0-5-2-4-4 1-4-2-7-7-7-5 0-9 2-11 5z" fill="url(#edgeTop)" />
        <path d="M12 12c-4 4-4 11 1 15 5 4 11 3 15-3-6 3-12 1-14-4-1-4-1-7 2-8z" fill="#123f8c" />
        <path d="M19 18c-1 2-1 4 4 4 3 0 6-1 8-4 0 3-1 5-3 6-5 3-12 1-13-3-1-3 0-5 2-6 2 0 3 1 2 3z" fill="#d9e4e8" />
      </svg>
    ),
  },
  {
    name: "Explorer",
    icon: (
      <svg width="32" height="28" viewBox="0 0 32 28">
        <path d="M1 2a2 2 0 0 1 2-2h8l4 4H1z" fill="#d99a16" />
        <rect x="1" y="3" width="30" height="24" rx="2" fill="#ffd04c" />
        <path d="M6 27v-6a2 2 0 0 1 2-2h16a2 2 0 0 1 2 2v6z" fill="#1a78c8" />
        <path d="M10 23h12v2H10z" fill="#0c4f8f" />
      </svg>
    ),
  },
  {
    name: "Store",
    icon: (
      <svg width="30" height="32" viewBox="0 0 30 32">
        <path d="M9 7V3a1.500 1.500 0 0 1 1.500-1.500h9A1.500 1.500 0 0 1 21 3v4" fill="none" stroke="#4fb8f0" strokeWidth="2.200" />
        <path d="M1 7h28v20a4 4 0 0 1-4 4H5a4 4 0 0 1-4-4z" fill="#174a7c" />
        <path d="M9.500 13h5v5.500h-5z" fill="#f25022" />
        <path d="M15.500 13h5v5.500h-5z" fill="#7fba00" />
        <path d="M9.500 19.500h5V25h-5z" fill="#3dbcf5" />
        <path d="M15.500 19.500h5V25h-5z" fill="#ffb900" />
      </svg>
    ),
  },
  { name: "Photoshop", icon: <span className="mb-1 flex h-7 w-7 items-center justify-center rounded-[4px] bg-[#001e36] text-sm font-bold text-[#31a8ff]">Ps</span> },
  {
    name: "MyASUS",
    icon: (
      <svg width="30" height="30" viewBox="0 0 30 30">
        <path d="M0 0h30v30H0z" fill="#0f62e6" />
        <path d="M3 23 13 9h4L7 23zM10 23 20 9h5v14h-4v-2h-5l2-3h3v-4l-7 9z" fill="#fff" />
      </svg>
    ),
  },
  {
    name: "Copilot",
    icon: (
      <svg width="30" height="30" viewBox="0 0 30 30">
        <defs>
          <linearGradient id="copA" x1="0" y1="0" x2="0" y2="1">
            <stop offset="0" stopColor="#1f78e0" />
            <stop offset=".5" stopColor="#2fb6a8" />
            <stop offset="1" stopColor="#f5cf3a" />
          </linearGradient>
          <linearGradient id="copB" x1="1" y1="0" x2="0" y2="1">
            <stop offset="0" stopColor="#a45cf0" />
            <stop offset=".5" stopColor="#f0559a" />
            <stop offset="1" stopColor="#ff8a3a" />
          </linearGradient>
        </defs>
        <path d="M9 1h9c2 0 3 1 3.500 3L23 8h-6c-2 0-3 1-3.500 3L11 20c-.5 2-2 2-4 2H4c-3 0-4-2-3-5L5 5c1-3 2-4 4-4z" fill="url(#copA)" />
        <path d="M21 29h-9c-2 0-3-1-3.500-3L7 22h6c2 0 3-1 3.500-3L19 10c.5-2 2-2 4-2h3c3 0 4 2 3 5l-4 12c-1 3-2 4-4 4z" fill="url(#copB)" />
      </svg>
    ),
  },
  {
    name: "McAfee",
    icon: (
      <svg width="28" height="32" viewBox="0 0 28 32">
        <path d="M1 1l13 7 13-7v23l-13 7-13-7zM7 11v10l7 4 7-4V11l-7 4z" fill="#c01f2e" fillRule="evenodd" />
      </svg>
    ),
  },
];

function Taskbar() {
  return (
    <footer className="flex h-[60px] shrink-0 items-center border-t border-[#a9adb0] bg-[linear-gradient(90deg,#d8dcdc_0px,#d6dad8_125px,#ecdcb6_165px,#f5e7b8_225px,#f0ec94_278px,#cfe9cb_310px,#c2eae6_355px,#c6eef4_470px,#cde6ea_620px,#cbe4e7_900px,#d6dadd_1050px,#d4d9dc_1400px,#dadade_1620px,#dddbe0_1920px)] text-[#1a1a1a]">
      <button className="ml-[25px] flex w-[533px] shrink-0 items-center gap-2.5 pb-0.5 text-left text-sm leading-5">
        <svg width="29" height="28" viewBox="0 0 29 28" aria-hidden="true">
          <circle cx="15" cy="14" r="12.500" fill="#f7a81b" />
          <path d="M5 21a12.500 12.500 0 0 0 20 0z" fill="#e8681d" />
          <path d="M5 6h24M3 11h18M8 16h18M0 20h20" stroke="#f6dca5" strokeWidth="2.600" />
        </svg>
        <span>
          97°F
          <br />
          <span className="text-[#55595c]">Haze</span>
        </span>
      </button>
      <button aria-label="Start">
        <svg width="29" height="29" viewBox="0 0 29 29">
          <defs>
            <linearGradient id="win" x1="0" y1="0" x2="1" y2="1">
              <stop offset="0" stopColor="#46cbfb" />
              <stop offset="1" stopColor="#0470cf" />
            </linearGradient>
          </defs>
          <path d="M0 0h14v14H0zM15 0h14v14H15zM0 15h14v14H0zM15 15h14v14H15z" fill="url(#win)" />
        </svg>
      </button>
      <label className="mx-[17px] flex h-[38px] w-[273px] shrink-0 items-center rounded-full border border-[#c5d5d9] bg-[#eff6f8] pr-2 pl-3">
        <Search size={20} strokeWidth={2.2} className="shrink-0" />
        <input placeholder="Search" aria-label="Search" className="ml-3 min-w-0 flex-1 text-base outline-none placeholder:text-[#4b5154]" />
        <SearchArt />
      </label>
      <div className="ml-[-13px] flex">
        {apps.map((app) => (
          <button key={app.name} aria-label={app.name} className="flex h-12 w-[55px] items-center justify-center">
            {app.icon}
          </button>
        ))}
        <button aria-label="Firefox" className="relative ml-1 flex h-12 w-12 items-center justify-center rounded-[4px] border border-[#dde0e3] bg-[#eceeef]">
          <FirefoxIcon size={30} />
          <span className="absolute bottom-0 h-1 w-5 rounded-full bg-[#2a8795]" />
        </button>
      </div>
      <div className="ml-auto flex shrink-0 items-center pr-6">
        <button aria-label="Hidden icons">
          <ChevronUp size={20} strokeWidth={2} />
        </button>
        <svg width="24" height="24" viewBox="0 0 24 24" fill="none" stroke="#1a1a1a" strokeWidth="1.600" className="ml-[19px]" aria-hidden="true">
          <path d="M2 11A9 9 0 0 1 20 6.500M20.500 2v5h-5M3 22v-5h5M3 17c2 3 4 4.500 7 5" />
          <circle cx="17" cy="17" r="6" fill="#ff9a0c" stroke="none" />
        </svg>
        <span className="ml-5 text-sm">ENG</span>
        <Wifi size={22} strokeWidth={1.7} className="ml-5" />
        <Volume2 size={20} strokeWidth={1.6} className="ml-2.5" />
        <BatteryMedium size={24} strokeWidth={1.8} className="ml-2" />
        <p className="ml-[22px] pb-0.5 text-right text-sm leading-5">
          3:12 PM
          <br />
          7/19/2025
        </p>
      </div>
    </footer>
  );
}

export default function App() {
  return (
    <div className="flex h-screen flex-col overflow-hidden font-['Noto_Sans','DejaVu_Sans',sans-serif]">
      <TitleBar />
      <NavBar />
      <BookmarksBar />
      <div className="flex min-h-0 flex-1">
        <BrowserSidebar />
        <WordPress />
      </div>
      <Taskbar />
    </div>
  );
}
